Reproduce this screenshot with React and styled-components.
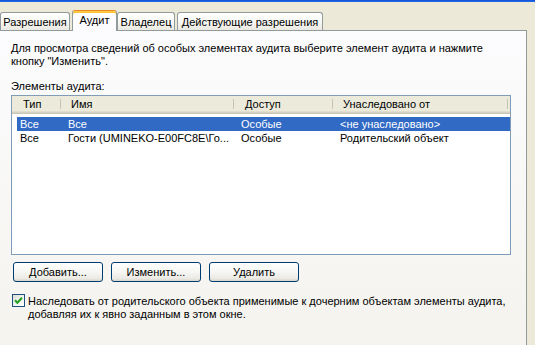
import React from "react"
import styled, { createGlobalStyle } from "styled-components"

const GlobalStyle = createGlobalStyle`
  html, body {
    margin: 0;
    padding: 0;
    background: #ece9d8;
  }
  body {
    font-family: "Liberation Sans", Arial, sans-serif;
    font-size: 11px;
    color: #000;
  }
`

const Window = styled.div`
  width: 535px;
  height: 345px;
  display: flex;
  flex-direction: column;
  overflow: hidden;
  background: #ece9d8;
`

const TitleEdge = styled.div`
  height: 2px;
  background: linear-gradient(180deg, #0a4fd6 0%, #2d6fe8 100%);
`

const TabRow = styled.div`
  display: flex;
  align-items: flex-end;
  gap: 2px;
  height: 20px;
  margin-top: 8px;
`

const Tab = styled.div`
  box-sizing: border-box;
  width: ${p => p.$w}px;
  height: 18px;
  display: flex;
  align-items: center;
  justify-content: center;
  border: 1px solid #919b9c;
  border-bottom: none;
  border-radius: 3px 3px 0 0;
  background: linear-gradient(180deg, #ffffff 0%, #f7f7f4 55%, #e9e8e1 100%);
  white-space: nowrap;
  padding-top: 1px;
`

const ActiveTab = styled(Tab)`
  height: 21px;
  margin-bottom: -1px;
  margin-right: -2px;
  position: relative;
  z-index: 1;
  border-top: 1px solid #e68b2c;
  box-shadow: inset 0 2px 0 #ffc73c;
  background: #fcfcfe;
  padding-top: 0;
  padding-bottom: 2px;
`

const Panel = styled.div`
  flex: 1;
  margin-right: 8px;
  border-top: 1px solid #919b9c;
  border-right: 1px solid #919b9c;
  background: linear-gradient(180deg, #fcfcfe 0%, #f4f3ee 100%);
  padding: 0 0 0 11px;
  display: flex;
  flex-direction: column;
  line-height: 13px;
`

const Intro = styled.div`
  margin-top: 11px;
`

const Label = styled.div`
  margin-top: 12px;
`

const ListBox = styled.div`
  box-sizing: border-box;
  width: 500px;
  height: 160px;
  margin-top: 2px;
  border: 1px solid #7f9db9;
  background: #fff;
`

const Header = styled.div`
  display: flex;
  height: 18px;
  background: #ebeadb;
  box-shadow: inset 0 -1px 0 #cbc7b8, inset 0 -2px 0 #d6d2c2, inset 0 -3px 0 #e2decd;
`

const HeadCell = styled.div`
  box-sizing: border-box;
  position: relative;
  width: ${p => p.$w}px;
  flex: none;
  padding: 2px 0 0 ${p => p.$pad}px;
  white-space: nowrap;
  overflow: hidden;

  &::after {
    content: "";
    position: absolute;
    right: 0;
    top: 3px;
    bottom: 5px;
    width: 1px;
    background: #c7c5b2;
    box-shadow: 1px 0 0 #fff;
  }
`

const Rows = styled.div`
  margin: 3px 0 0 5px;
`

const Row = styled.div`
  display: flex;
  height: 14px;
  align-items: center;
  background: ${p => (p.$selected ? "#316ac5" : "transparent")};
  color: ${p => (p.$selected ? "#fff" : "#000")};
`

const Cell = styled.div`
  box-sizing: border-box;
  width: ${p => p.$w}px;
  flex: none;
  padding-left: ${p => p.$pad}px;
  white-space: nowrap;
  overflow: hidden;
`

const ButtonRow = styled.div`
  display: flex;
  gap: 8px;
  margin: 7px 0 0 2px;
`

const Button = styled.button`
  box-sizing: border-box;
  width: 90px;
  height: 20px;
  padding: 0;
  border: 1px solid #003c74;
  border-radius: 3px;
  background: linear-gradient(180deg, #ffffff 0%, #f6f6f3 50%, #ebeae4 85%, #d9d5cb 100%);
  font: inherit;
  color: #000;
`

const CheckRow = styled.label`
  display: flex;
  align-items: flex-start;
  gap: 3px;
  margin: 12px 0 0 1px;
`

const Box = styled.span`
  box-sizing: border-box;
  width: 13px;
  height: 13px;
  flex: none;
  border: 1px solid #1c5180;
  background: linear-gradient(135deg, #dcdcd7 0%, #f4f4f0 60%, #ffffff 100%);
  display: flex;
  align-items: center;
  justify-content: center;
`

const CheckText = styled.span`
  margin-top: 1px;
`

const cols = [
  { w: 49, head: "Тип", hp: 11 },
  { w: 173, head: "Имя", hp: 10 },
  { w: 99, head: "Доступ", hp: 11 },
  { w: 175, head: "Унаследовано от", hp: 10 },
]

const rows = [
  { sel: true, cells: ["Все", "Все", "Особые", "<не унаследовано>"] },
  { sel: false, cells: ["Все", "Гости (UMINEKO-E00FC8E\\Го...", "Особые", "Родительский объект"] },
]

export default function App() {
  return (
    <>
      <GlobalStyle />
      <Window>
        <TitleEdge />
        <TabRow>
          <Tab $w={70}>Разрешения</Tab>
          <ActiveTab $w={45}>Аудит</ActiveTab>
          <Tab $w={58}>Владелец</Tab>
          <Tab $w={146}>Действующие разрешения</Tab>
        </TabRow>
        <Panel>
          <Intro>
            Для просмотра сведений об особых элементах аудита выберите элемент аудита и нажмите
            <br />
            кнопку "Изменить".
          </Intro>
          <Label>Элементы аудита:</Label>
          <ListBox>
            <Header>
              {cols.map(c => (
                <HeadCell key={c.head} $w={c.w} $pad={c.hp}>
                  {c.head}
                </HeadCell>
              ))}
            </Header>
            <Rows>
              {rows.map((r, i) => (
                <Row key={i} $selected={r.sel}>
                  {r.cells.map((t, j) => (
                    <Cell key={j} $w={j === 0 ? 44 : j === 3 ? 177 : cols[j].w} $pad={j === 0 ? 3 : 7}>
                      {t}
                    </Cell>
                  ))}
                </Row>
              ))}
            </Rows>
          </ListBox>
          <ButtonRow>
            <Button>Добавить...</Button>
            <Button>Изменить...</Button>
            <Button>Удалить</Button>
          </ButtonRow>
          <CheckRow>
            <Box>
              <svg width="9" height="9" viewBox="0 0 9 9">
                <path d="M1 4.2 L3.4 6.8 L8 1.8" fill="none" stroke="#21a121" strokeWidth="2" />
              </svg>
            </Box>
            <CheckText>
              Наследовать от родительского объекта применимые к дочерним объектам элементы аудита,
              <br />
              добавляя их к явно заданным в этом окне.
            </CheckText>
          </CheckRow>
        </Panel>
      </Window>
    </>
  )
}
